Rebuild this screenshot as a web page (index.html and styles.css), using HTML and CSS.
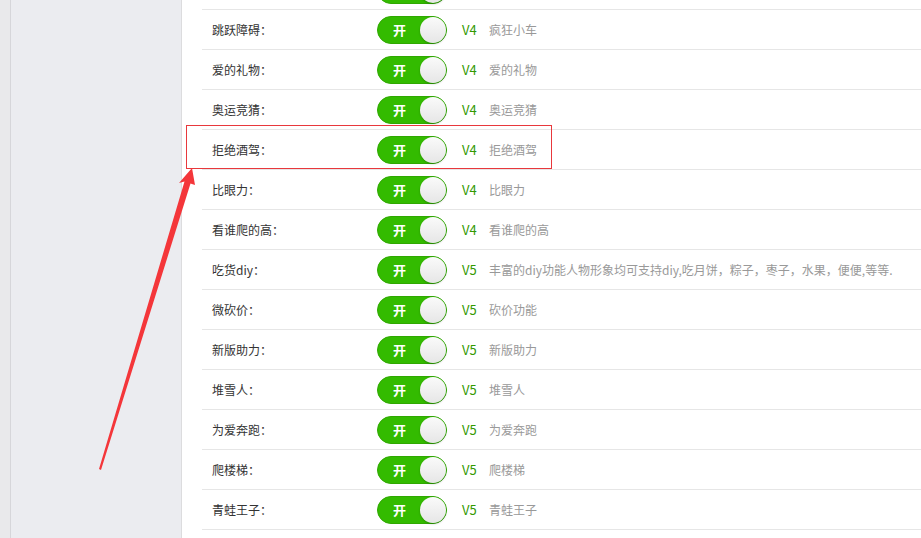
FILE: index.html
```html
<!DOCTYPE html>
<html lang="zh">
<head>
  <meta charset="UTF-8">
  <title>功能开关</title>
  <link rel="stylesheet" href="styles.css">
</head>
<body>
  <div class="page">
    <div class="edge"></div>
    <div class="sidebar"></div>
    <div class="main">
      <ul class="list">
        <li class="row"><span class="label">疯狂小车<em>：</em></span><span class="switch"><b>开</b><i></i></span><span class="ver">V4</span><span class="desc">疯狂小车</span></li>
        <li class="row"><span class="label">跳跃障碍<em>：</em></span><span class="switch"><b>开</b><i></i></span><span class="ver">V4</span><span class="desc">疯狂小车</span></li>
        <li class="row"><span class="label">爱的礼物<em>：</em></span><span class="switch"><b>开</b><i></i></span><span class="ver">V4</span><span class="desc">爱的礼物</span></li>
        <li class="row"><span class="label">奥运竞猜<em>：</em></span><span class="switch"><b>开</b><i></i></span><span class="ver">V4</span><span class="desc">奥运竞猜</span></li>
        <li class="row"><span class="label">拒绝酒驾<em>：</em></span><span class="switch"><b>开</b><i></i></span><span class="ver">V4</span><span class="desc">拒绝酒驾</span></li>
        <li class="row"><span class="label">比眼力<em>：</em></span><span class="switch"><b>开</b><i></i></span><span class="ver">V4</span><span class="desc">比眼力</span></li>
        <li class="row"><span class="label">看谁爬的高<em>：</em></span><span class="switch"><b>开</b><i></i></span><span class="ver">V4</span><span class="desc">看谁爬的高</span></li>
        <li class="row"><span class="label">吃货diy<em>：</em></span><span class="switch"><b>开</b><i></i></span><span class="ver">V5</span><span class="desc">丰富的diy功能人物形象均可支持diy,吃月饼，粽子，枣子，水果，便便,等等.</span></li>
        <li class="row"><span class="label">微砍价<em>：</em></span><span class="switch"><b>开</b><i></i></span><span class="ver">V5</span><span class="desc">砍价功能</span></li>
        <li class="row"><span class="label">新版助力<em>：</em></span><span class="switch"><b>开</b><i></i></span><span class="ver">V5</span><span class="desc">新版助力</span></li>
        <li class="row"><span class="label">堆雪人<em>：</em></span><span class="switch"><b>开</b><i></i></span><span class="ver">V5</span><span class="desc">堆雪人</span></li>
        <li class="row"><span class="label">为爱奔跑<em>：</em></span><span class="switch"><b>开</b><i></i></span><span class="ver">V5</span><span class="desc">为爱奔跑</span></li>
        <li class="row"><span class="label">爬楼梯<em>：</em></span><span class="switch"><b>开</b><i></i></span><span class="ver">V5</span><span class="desc">爬楼梯</span></li>
        <li class="row"><span class="label">青蛙王子<em>：</em></span><span class="switch"><b>开</b><i></i></span><span class="ver">V5</span><span class="desc">青蛙王子</span></li>
      </ul>
    </div>
  </div>

  <!-- annotation -->
  <div class="mark"></div>
  <svg class="arrow" width="921" height="538" viewBox="0 0 921 538">
    <polygon points="192,168 195,185 190.5,183.5 101,470 99,469 184.5,181.5 179,183" fill="#f4363a"/>
  </svg>
</body>
</html>
```

FILE: styles.css
```css
body { margin: 0; font-family: "Noto Sans CJK SC", "Noto Sans", sans-serif; font-size: 12px; color: #333; background: #fff; overflow: hidden; }
.page { display: flex; height: 538px; }
.edge { width: 10px; background: #e9e9eb; border-right: 1px solid #d6d6da; }
.sidebar { width: 170px; background: #ebecf0; border-right: 1px solid #dcdcde; }
.main { flex: 1; min-width: 0; padding-left: 20px; overflow: hidden; }

.list { list-style: none; margin: -30px 0 0; padding: 0; }
.row { height: 39px; border-bottom: 1px solid #e6e6e6; display: flex; align-items: center; padding-left: 10px; }
.label { width: 165px; flex-shrink: 0; }
.label em { font-style: normal; font-family: "Noto Sans CJK TC", sans-serif; }
.switch { flex-shrink: 0; width: 68px; height: 26px; border: 1px solid #2fa800; border-radius: 14px; background: #33bb00; display: flex; align-items: center; justify-content: space-between; box-sizing: content-box; }
.switch b { color: #fff; font-weight: bold; font-size: 13px; margin-left: 15px; }
.switch i { width: 26px; height: 26px; border-radius: 50%; background: linear-gradient(#fafafa, #e6e6e6); box-shadow: 0 1px 2px rgba(0,0,0,.25); }
.ver { flex-shrink: 0; width: 27px; margin-left: 15px; font-size: 13px; color: #339900; }
.desc { color: #999; white-space: nowrap; }

.mark { position: absolute; left: 186px; top: 125px; width: 364px; height: 42px; border: 1px solid #e8383c; }
.arrow { position: absolute; left: 0; top: 0; }
```
